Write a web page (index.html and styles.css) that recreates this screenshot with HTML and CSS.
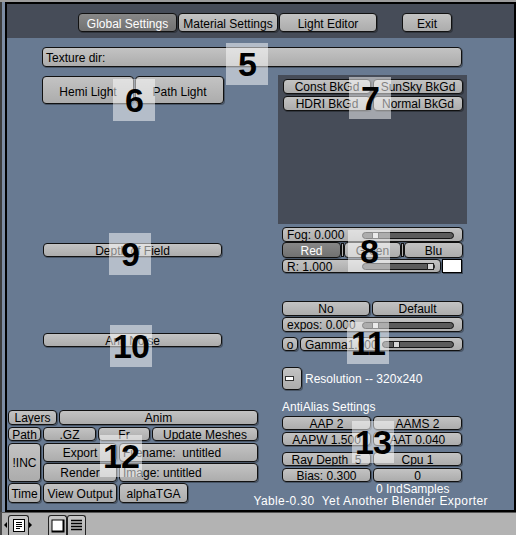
FILE: index.html
```html
<!DOCTYPE html>
<html>
<head>
<meta charset="utf-8">
<title>Yable</title>
<link rel="stylesheet" href="styles.css">
</head>
<body>
<div class="screen">
  <div class="topline"></div>
  <div class="area">
    <div class="edge"></div>
    <div class="win">
      <div class="header">
        <div class="tabs">
          <div class="btn tab tab-global on">Global Settings</div>
          <div class="btn tab tab-material">Material Settings</div>
          <div class="btn tab tab-light">Light Editor</div>
        </div>
        <div class="btn tab tab-exit">Exit</div>
      </div>
      <div class="content">
        <div class="btn field texdir">Texture dir:</div>
        <div class="cols">
          <div class="left">
            <div class="lights">
              <div class="btn hemi">Hemi Light</div>
              <div class="btn path">Path Light</div>
            </div>
            <div class="btn wide dof">Depth of Field</div>
            <div class="btn wide anoise">Anti Noise</div>
            <div class="group">
              <div class="grow row-layers">
                <div class="btn">Layers</div>
                <div class="btn">Anim</div>
              </div>
              <div class="grow row-path">
                <div class="btn">Path</div>
                <div class="btn">.GZ</div>
                <div class="btn">Fr</div>
                <div class="btn">Update Meshes</div>
              </div>
              <div class="grow row-inc">
                <div class="btn">!INC</div>
                <div class="gcol">
                  <div class="grow row-export">
                    <div class="btn">Export</div>
                    <div class="btn field">Filename:  untitled</div>
                  </div>
                  <div class="grow row-export">
                    <div class="btn">Render</div>
                    <div class="btn field">Image: untitled</div>
                  </div>
                </div>
              </div>
              <div class="grow row-time">
                <div class="btn">Time</div>
                <div class="btn">View Output</div>
                <div class="btn">alphaTGA</div>
              </div>
            </div>
          </div>
          <div class="right">
            <div class="panel">
              <div class="bkgd">
                <div class="btn">Const BkGd</div>
                <div class="btn">SunSky BkGd</div>
              </div>
              <div class="bkgd">
                <div class="btn">HDRI BkGd</div>
                <div class="btn">Normal BkGd</div>
              </div>
            </div>
            <div class="btn slider fog">
              <span class="slabel">Fog: 0.000</span>
              <span class="track track-fog"><span class="thumb thumb-start"></span></span>
            </div>
            <div class="rgb">
              <div class="btn on">Red</div>
              <div class="sep"></div>
              <div class="btn">Green</div>
              <div class="sep"></div>
              <div class="btn">Blu</div>
            </div>
            <div class="rrow">
              <div class="btn slider rslider">
                <span class="slabel">R: 1.000</span>
                <span class="track track-r"><span class="thumb thumb-end"></span></span>
              </div>
              <div class="swatch"></div>
            </div>
            <div class="pair nodef">
              <div class="btn">No</div>
              <div class="btn">Default</div>
            </div>
            <div class="btn slider expos">
              <span class="slabel">expos: 0.000</span>
              <span class="track track-fog"><span class="thumb thumb-start"></span></span>
            </div>
            <div class="gammarow">
              <div class="btn">o</div>
              <div class="btn slider">
                <span class="slabel">Gamma1.000</span>
                <span class="track track-gamma"><span class="thumb thumb-gamma"></span></span>
              </div>
            </div>
            <div class="resolution">
              <div class="btn toggle"><span class="dash"></span></div>
              <span class="wtext">Resolution -- 320x240</span>
            </div>
            <div class="wtext aalabel">AntiAlias Settings</div>
            <div class="aa">
              <div class="btn">AAP 2</div>
              <div class="btn">AAMS 2</div>
              <div class="btn">AAPW 1.500</div>
              <div class="btn">AAT 0.040</div>
            </div>
            <div class="aa aa-second">
              <div class="btn">Ray Depth  5</div>
              <div class="btn">Cpu 1</div>
              <div class="btn">Bias: 0.300</div>
              <div class="btn">0</div>
            </div>
            <div class="wtext indsamples">0 IndSamples</div>
            <div class="yable"><span class="wtext">Yable-0.30  Yet Another Blender Exporter</span></div>
          </div>
        </div>
      </div>
    </div>
  </div>
  <div class="bar">
    <span class="arr arr-l"></span>
    <div class="ibtn menu">
      <svg width="12" height="13" viewBox="0 0 12 13">
        <rect x="0.5" y="0.5" width="11" height="12" fill="#fff" stroke="#000"/>
        <path d="M3 3.5h6M3 5.5h6M3 7.5h6M3 9.5h4" stroke="#000" stroke-width="1"/>
      </svg>
    </div>
    <span class="arr arr-r"></span>
    <div class="ibtns">
      <div class="ibtn">
        <svg width="14" height="14" viewBox="0 0 14 14">
          <rect x="0.5" y="0.5" width="13" height="13" fill="#000"/>
          <rect x="1.5" y="1.5" width="10" height="10" fill="#fff"/>
        </svg>
      </div>
      <div class="ibtn">
        <svg width="13" height="13" viewBox="0 0 13 13">
          <path d="M1 1.5h11M1 4.5h11M1 7.5h11M1 10.5h11" stroke="#000" stroke-width="1.4"/>
        </svg>
      </div>
    </div>
  </div>

  <div class="tag t5">5</div>
  <div class="tag t6">6</div>
  <div class="tag t7">7</div>
  <div class="tag t8">8</div>
  <div class="tag t9">9</div>
  <div class="tag t10">10</div>
  <div class="tag t11">11</div>
  <div class="tag t12">12</div>
  <div class="tag t13">13</div>
</div>
</body>
</html>
```

FILE: styles.css
```css
* { box-sizing: border-box; }
html, body { margin: 0; padding: 0; }
body {
  width: 516px;
  height: 535px;
  overflow: hidden;
  font-family: "Liberation Sans", Arial, sans-serif;
  font-size: 12px;
  color: #000;
  background: #b3b3b3;
}
.screen {
  position: relative;
  width: 516px;
  height: 535px;
  display: flex;
  flex-direction: column;
  background: #b3b3b3;
}
.topline { height: 2px; flex: none; background: #9c9c9c; }
.area { display: flex; height: 510px; flex: none; }
.edge {
  width: 5px;
  flex: none;
  background: linear-gradient(to right, #3c3c3c 0, #3c3c3c 2px, #7c8ca3 2px);
}
.win {
  flex: 1;
  border: 2px solid #000;
  display: flex;
  flex-direction: column;
  background: #687a92;
  min-width: 0;
}

/* generic Blender-like button */
.btn {
  height: 15px;
  border: 1px solid #111;
  border-radius: 4px;
  background: linear-gradient(#c3c3c3, #acacac);
  box-shadow: 1px 1px 0 rgba(0, 0, 0, 0.3);
  display: flex;
  align-items: center;
  justify-content: center;
  padding-top: 1px;
  white-space: pre;
  line-height: 12px;
  overflow: hidden;
}
.btn.on {
  background: linear-gradient(#878787, #717171);
  color: #fff;
}
.btn.field { justify-content: flex-start; padding-left: 3px; }
.wtext { color: #fff; white-space: pre; }

/* header */
.header {
  height: 34px;
  flex: none;
  background: #464c58;
  display: flex;
  align-items: flex-start;
  padding: 9px 0 0 71px;
}
.tabs { display: flex; gap: 1px; }
.tab { height: 19px; padding-top: 2px; }
.tab-global { width: 99px; }
.tab-material { width: 100px; }
.tab-light { width: 98px; }
.tab-exit { width: 50px; margin-left: 25px; }

/* content */
.content { flex: 1; }
.texdir { width: 420px; height: 20px; margin: 9px 0 0 35px; padding-top: 2px; }
.cols { display: flex; margin-top: 8px; }
.left { width: 216px; margin-left: 35px; flex: none; }
.right { margin-left: 20px; flex: 1; min-width: 0; }

.lights { display: flex; gap: 1px; margin-top: 1px; }
.lights .btn { height: 28px; padding-top: 3px; }
.hemi { width: 92px; }
.path { width: 89px; }
.wide { width: 179px; height: 14px; margin-left: 1px; }
.dof { margin-top: 139px; }
.anoise { margin-top: 76px; }

.group { margin: 63px 0 0 -34px; width: 250px; display: flex; flex-direction: column; }
.grow { display: grid; column-gap: 2px; }
.row-layers { grid-template-columns: 49px 199px; height: 15px; }
.row-layers .btn { height: 15px; }
.row-path { grid-template-columns: 33px 53px 52px 106px; margin-top: 2px; }
.row-path .btn { height: 14px; }
.row-inc { grid-template-columns: 33px 215px; margin-top: 2px; }
.row-inc > .btn { height: 39px; }
.gcol { display: flex; flex-direction: column; gap: 1px; }
.row-export { grid-template-columns: 74px 139px; }
.row-export .btn { height: 19px; }
.row-time { grid-template-columns: 33px 74px 69px; margin-top: 1px; }
.row-time .btn { height: 20px; padding-top: 2px; }

/* right column */
.panel {
  width: 189px;
  height: 149px;
  background: #464c58;
  padding: 4px 0 0 5px;
}
.bkgd { display: grid; grid-template-columns: 88px 90px; column-gap: 2px; }
.bkgd + .bkgd { margin-top: 2px; }
.bkgd .btn { height: 15px; }

.slider { justify-content: flex-start; padding-left: 4px; }
.slabel { flex: none; }
.track {
  position: relative;
  margin-left: auto;
  height: 7px;
  border: 1px solid #111;
  border-radius: 4px;
  background: #5b5b5b;
  flex: none;
}
.track-fog { width: 92px; margin-right: 8px; }
.track-r { width: 73px; margin-right: 5px; }
.track-gamma { width: 72px; margin-right: 8px; }
.thumb {
  position: absolute;
  top: -1px;
  width: 7px;
  height: 7px;
  border: 1px solid #222;
  background: #d6d6d6;
}
.thumb-start { left: 9px; }
.thumb-end { left: 64px; }
.thumb-gamma { left: 10px; }

.fog { width: 181px; margin: 3px 0 0 4px; }
.rgb { display: flex; margin-left: 4px; height: 16px; }
.rgb .btn { height: 16px; }
.rgb .btn:nth-child(1) { width: 59px; }
.rgb .btn:nth-child(3) { width: 57px; }
.rgb .btn:nth-child(5) { width: 59px; }
.sep {
  width: 3px;
  height: 14px;
  margin-top: 1px;
  border: 1px solid #111;
  background: #b0b0b0;
}
.rrow { display: flex; gap: 1px; margin: 1px 0 0 4px; }
.rslider { width: 159px; height: 14px; }
.swatch { width: 20px; height: 14px; border: 1px solid #000; background: #fff; box-shadow: 1px 1px 0 rgba(0,0,0,.4); }

.pair { display: grid; column-gap: 2px; margin-left: 4px; }
.nodef { grid-template-columns: 88px 91px; margin-top: 28px; }
.expos { width: 181px; margin: 1px 0 0 4px; }
.gammarow { display: grid; grid-template-columns: 16px 163px; column-gap: 2px; margin: 5px 0 0 4px; }
.gammarow .btn { height: 14px; }

.resolution { display: flex; align-items: center; margin: 16px 0 0 4px; }
.toggle { width: 20px; height: 23px; justify-content: flex-start; padding: 0 0 0 2px; }
.dash { width: 9px; height: 5px; border: 1px solid #333; background: #fff; }
.resolution .wtext { margin-left: 3px; padding-top: 1px; }

.aalabel { margin: 10px 0 0 4px; line-height: 14px; height: 14px; }
.aa {
  display: grid;
  grid-template-columns: 89px 89px;
  column-gap: 2px;
  row-gap: 2px;
  margin: 2px 0 0 4px;
}
.aa .btn { height: 14px; }
.aa-second { margin-top: 6px; }
.indsamples { line-height: 12px; height: 12px; padding-left: 98px; margin-top: 1px; }
.yable { display: flex; justify-content: flex-end; padding-right: 26px; line-height: 12px; height: 12px; }
.yable .wtext { letter-spacing: 0.4px; }

/* bottom bar */
.bar {
  flex: 1;
  display: flex;
  align-items: flex-end;
  border-top: 1px solid #555;
  border-left: 2px solid #4a4a4a;
  padding-left: 2px;
  background: #b3b3b3;
}
.ibtn {
  height: 20px;
  border: 1px solid #222;
  border-bottom: none;
  border-radius: 3px 3px 0 0;
  background: linear-gradient(#c8c8c8, #b4b4b4);
  display: flex;
  align-items: center;
  justify-content: center;
}
.menu { width: 21px; }
.arr { width: 0; height: 0; border-top: 3px solid transparent; border-bottom: 3px solid transparent; margin-bottom: 7px; }
.arr-l { border-right: 3px solid #000; margin-right: 1px; }
.arr-r { border-left: 3px solid #000; }
.ibtns { display: flex; margin-left: 16px; }
.ibtns .ibtn { width: 19px; }

/* numbered callouts */
.tag {
  position: absolute;
  width: 42px;
  height: 42px;
  background: rgba(255, 255, 255, 0.5);
  color: #000;
  font: bold 34px/42px "Liberation Sans", Arial, sans-serif;
  text-align: center;
  letter-spacing: -1px;
}
.t5 { left: 226px; top: 43px; }
.t6 { left: 113px; top: 79px; }
.t7 { left: 349px; top: 77px; }
.t8 { left: 348px; top: 230px; }
.t9 { left: 109px; top: 233px; }
.t10 { left: 110px; top: 325px; }
.t11 { left: 347px; top: 322px; }
.t12 { left: 100px; top: 435px; }
.t13 { left: 352px; top: 421px; }
```
